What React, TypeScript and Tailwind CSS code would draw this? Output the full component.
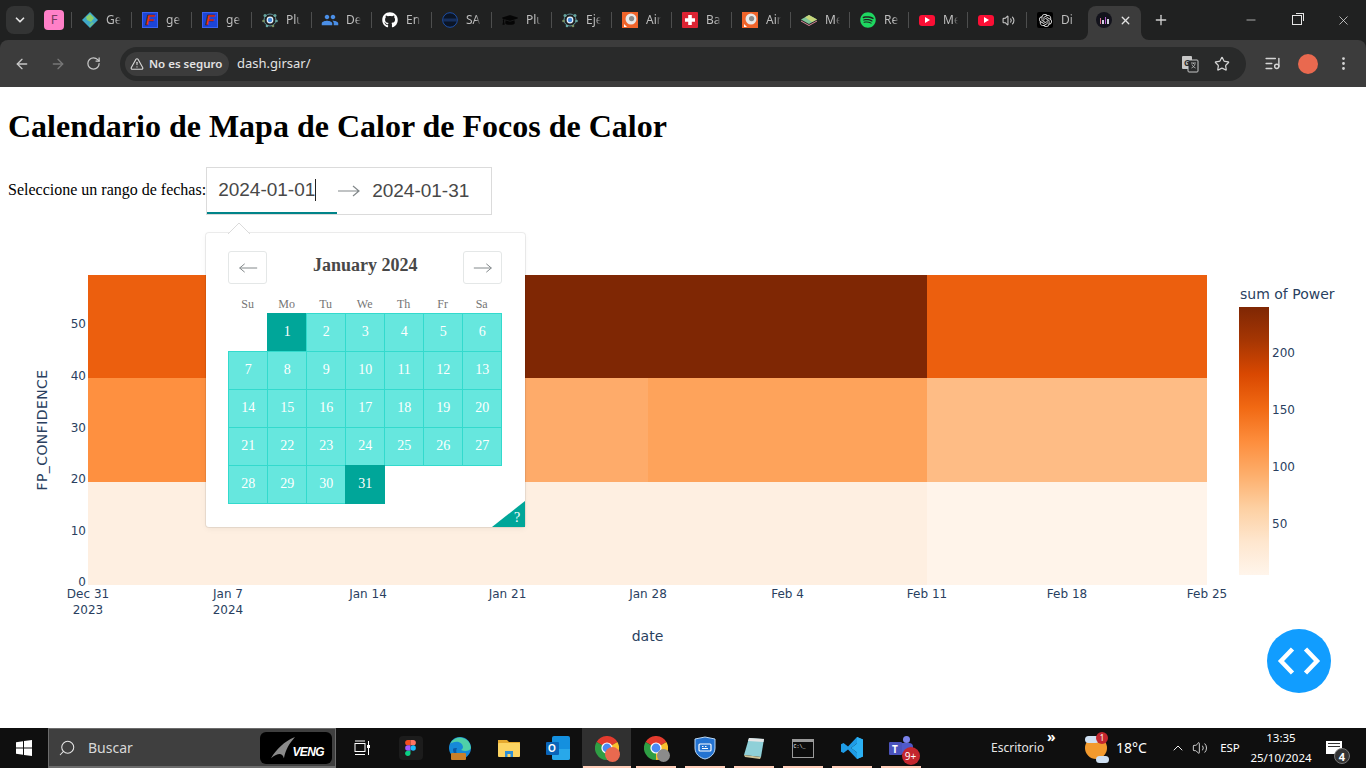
import React from "react";
import {
  ArrowLeft,
  ArrowRight,
  ChevronDown,
  ChevronUp,
  EllipsisVertical,
  ListMusic,
  Minus,
  Plus,
  RotateCw,
  Search,
  Star,
  TriangleAlert,
  Volume2,
  X,
} from "lucide-react";
import { FaGithub, FaGraduationCap, FaSpotify } from "react-icons/fa";
import { MdPeople } from "react-icons/md";
import { SiOpenai } from "react-icons/si";

// favicons
const GlobeIcon = () => (
  <svg viewBox="0 0 16 16" className="w-4 h-4">
    <polygon points="8,0 16,8 8,16 0,8" fill="#3fa9c9" />
    <polygon points="8,2 12,6 9,10 5,8 4,5" fill="#8bd06a" />
    <polygon points="10,10 12,11 8,15 7,13" fill="#6cc08a" />
  </svg>
);

const FlashIcon = () => (
  <div className="w-4 h-4 bg-[#1c45d8] flex items-center justify-center outline outline-1 -outline-offset-1 outline-[#3a63f0]">
    <span className="text-[15px] leading-4 font-bold italic text-[#f03a1c] [-webkit-text-stroke:0.4px_#3a0a00] font-['Liberation_Sans',sans-serif]">F</span>
  </div>
);

const NetworkIcon = () => (
  <svg viewBox="0 0 16 16" className="w-4 h-4">
    <circle cx="8" cy="8" r="6" fill="none" stroke="#5a8f96" strokeWidth="1" />
    <circle cx="8" cy="8" r="3.4" fill="#e8f2fa" />
    <circle cx="8" cy="8" r="2.2" fill="#3f86d8" />
    <circle cx="3" cy="3.5" r="1.5" fill="#66a6a0" />
    <circle cx="13" cy="3.5" r="1.5" fill="#66a6a0" />
    <circle cx="1.5" cy="9" r="1.3" fill="#7a8f60" />
    <circle cx="14.5" cy="9" r="1.3" fill="#66a6a0" />
    <circle cx="5" cy="14" r="1.3" fill="#66a6a0" />
    <circle cx="11" cy="14" r="1.3" fill="#7a8f60" />
  </svg>
);

const ConaeIcon = () => (
  <svg viewBox="0 0 16 16" className="w-4 h-4">
    <circle cx="8" cy="8" r="7.3" fill="#0b1526" stroke="#1d4fa8" strokeWidth="1" />
    <rect x="1" y="6.5" width="14" height="3" fill="#17305e" />
  </svg>
);

const AirIcon = () => (
  <div className="w-4 h-4 bg-[#f0642a] flex items-center justify-center">
    <svg viewBox="0 0 16 16" className="w-4 h-4">
      <circle cx="9" cy="7" r="5.5" fill="#e7e7e7" />
      <circle cx="9.6" cy="6.6" r="2.6" fill="#8a8a8a" />
      <path d="M2 15 L2 12 L5 15 Z" fill="#ffffff" />
    </svg>
  </div>
);

const SwissIcon = () => (
  <div className="w-4 h-4 bg-[#dc2433] rounded-[1px] flex items-center justify-center">
    <svg viewBox="0 0 16 16" className="w-4 h-4">
      <path d="M6.2 3h3.6v3.2H13v3.6H9.8V13H6.2V9.8H3V6.2h3.2z" fill="#fff" />
    </svg>
  </div>
);

const LayersIcon = () => (
  <svg viewBox="0 0 16 16" className="w-4 h-4">
    <polygon points="8,3 16,7.5 8,12 0,7.5" fill="#7fc79a" />
    <polygon points="8,3 16,7.5 11,10 4,5.2" fill="#c7d67a" />
    <polygon points="0,8.5 8,13 16,8.5 16,9.5 8,14 0,9.5" fill="#d98a9a" />
  </svg>
);

const YoutubeIcon = () => (
  <div className="w-4 h-[11px] bg-[#fb0f35] rounded-[3px] flex items-center justify-center">
    <div className="w-0 h-0 border-y-[3px] border-y-transparent border-l-[5px] border-l-white" />
  </div>
);

const GptIcon = () => (
  <div className="w-4 h-4 bg-black rounded-[2px] flex items-center justify-center">
    <SiOpenai size={13} color="#e5e5e5" />
  </div>
);

const DashIcon = () => (
  <div className="w-4 h-4 rounded-full bg-[#13131c] flex items-end justify-center gap-[1px] pb-[4px]">
    <div className="w-[1px] h-[6px] bg-[#d86a8a]" />
    <div className="w-[2px] h-[4px] bg-[#d0d0e0]" />
    <div className="w-[1px] h-[7px] bg-[#b05ad0]" />
    <div className="w-[2px] h-[5px] bg-[#d0d0e0]" />
  </div>
);

const tabs = [
  { icon: <GlobeIcon />, label: "Ge", w: "w-[60px]" },
  { icon: <FlashIcon />, label: "ge", w: "w-[60px]" },
  { icon: <FlashIcon />, label: "ge", w: "w-[60px]" },
  { icon: <NetworkIcon />, label: "Plu", w: "w-[60px]" },
  { icon: <MdPeople size={18} color="#4a8fe7" className="-mx-px" />, label: "De", w: "w-[60px]" },
  { icon: <FaGithub size={16} color="#fff" />, label: "En", w: "w-[60px]" },
  { icon: <ConaeIcon />, label: "SA", w: "w-[60px]" },
  { icon: <FaGraduationCap size={16} color="#050505" />, label: "Plu", w: "w-[60px]" },
  { icon: <NetworkIcon />, label: "Eje", w: "w-[60px]" },
  { icon: <AirIcon />, label: "Air", w: "w-[60px]" },
  { icon: <SwissIcon />, label: "Ba", w: "w-[60px]" },
  { icon: <AirIcon />, label: "Air", w: "w-[59px]" },
  { icon: <LayersIcon />, label: "Me", w: "w-[59px]" },
  { icon: <FaSpotify size={16} color="#1ed760" />, label: "Re", w: "w-[59px]" },
  { icon: <YoutubeIcon />, label: "Me", w: "w-[59px]" },
  { icon: <YoutubeIcon />, label: "", w: "w-[59px]" },
  { icon: <GptIcon />, label: "Di", w: "w-[62px]" },
];

const BrowserChrome = () => (
  <header className="h-[87px] shrink-0 bg-[#202121] font-['Noto_Sans',sans-serif]">
    <div className="h-10 flex items-center">
      <div className="ml-[6px] w-7 h-7 rounded-lg bg-[#333434] flex items-center justify-center">
        <ChevronDown size={14} color="#e3e3e3" strokeWidth={3} />
      </div>
      <div className="ml-[10px] w-5 h-5 rounded bg-[#ff80c8] flex items-center justify-center text-[13px] text-[#7a3a60]">F</div>
      <div className="ml-[7px] flex items-center">
        {tabs.map((tab, i) => (
          <div key={i} className={`${tab.w} h-10 flex items-center`}>
            <div className="w-px h-4 bg-[#4d4e4e]" />
            <div className="ml-[10px] w-4 h-4 flex items-center justify-center">{tab.icon}</div>
            {tab.label ? (
              <span className="ml-2 w-[15px] overflow-hidden text-xs leading-4 text-[#bdbdbd] [mask-image:linear-gradient(90deg,#000_65%,transparent)]">
                {tab.label}
              </span>
            ) : (
              <Volume2 size={13} color="#c7c7c7" className="ml-2" />
            )}
          </div>
        ))}
        <div className="relative w-[53px] h-[34px] mt-[6px] pb-[6px] bg-[#3c3c3c] rounded-t-lg flex items-center pl-2">
          <svg viewBox="0 0 8 8" className="absolute -left-2 bottom-0 w-2 h-2">
            <path d="M8 0 V8 H0 A8 8 0 0 0 8 0 Z" fill="#3c3c3c" />
          </svg>
          <svg viewBox="0 0 8 8" className="absolute -right-2 bottom-0 w-2 h-2">
            <path d="M0 0 V8 H8 A8 8 0 0 1 0 0 Z" fill="#3c3c3c" />
          </svg>
          <DashIcon />
          <X size={13} color="#e3e3e3" strokeWidth={2.5} className="ml-[7px]" />
        </div>
        <Plus size={16} color="#d0d0d0" strokeWidth={2} className="ml-3" />
      </div>
      <div className="ml-auto flex items-center">
        <div className="w-[46px] h-10 flex items-center justify-center">
          <Minus size={14} color="#e6e6e6" strokeWidth={1.2} />
        </div>
        <div className="w-[46px] h-10 flex items-center justify-center">
          <div className="relative w-[10px] h-[10px] border border-[#e6e6e6] bg-[#202121]">
            <div className="absolute -top-[3px] -right-[3px] w-[8px] h-[8px] border-t border-r border-[#e6e6e6]" />
          </div>
        </div>
        <div className="w-[46px] h-10 flex items-center justify-center">
          <X size={15} color="#e6e6e6" strokeWidth={1.2} />
        </div>
      </div>
    </div>
    <div className="h-[47px] bg-[#3c3c3c] rounded-t-lg flex items-center">
      <div className="w-[120px] flex items-center pl-[14px] gap-5">
        <ArrowLeft size={16} color="#c7c7c7" strokeWidth={2} />
        <ArrowRight size={16} color="#777" strokeWidth={2} />
        <RotateCw size={15} color="#c7c7c7" strokeWidth={2} />
      </div>
      <div className="w-[1126px] h-[34px] rounded-full bg-[#292a2a] flex items-center pl-[5px] pr-4">
        <div className="w-[104px] h-6 rounded-full bg-[#3c3c3c] flex items-center pl-[5px] gap-[5px]">
          <TriangleAlert size={14} color="#d5d5d5" />
          <span className="text-[11.5px] font-semibold text-[#e3e3e3] whitespace-nowrap">No es seguro</span>
        </div>
        <span className="ml-2 text-[13px] text-[#e3e3e3]">dash.girsar/</span>
        <div className="ml-auto flex items-center gap-[15px]">
          <svg viewBox="0 0 18 18" className="w-[18px] h-[18px]">
            <rect x="1" y="1" width="10" height="13" rx="1" fill="#c7c7c7" />
            <rect x="7" y="5" width="10" height="12" rx="1" fill="#292a2a" stroke="#c7c7c7" strokeWidth="1" />
            <text x="3" y="11" fontSize="8" fontWeight="700" fill="#292a2a">G</text>
            <path d="M10 8h5M12.5 8v1M14 9c-.5 2-2 3.5-3.5 4M11 9.5c.5 1.5 2 3 3.5 3.5" stroke="#c7c7c7" strokeWidth="0.8" fill="none" />
          </svg>
          <Star size={16} color="#d5d5d5" strokeWidth={1.8} />
        </div>
      </div>
      <ListMusic size={17} color="#d5d5d5" className="ml-[18px]" />
      <div className="ml-[17px] w-5 h-5 rounded-full bg-[#e9694f]" />
      <EllipsisVertical size={17} color="#d5d5d5" className="ml-[17px]" />
    </div>
  </header>
);

const weekDays = ["Su", "Mo", "Tu", "We", "Th", "Fr", "Sa"];
const days = Array.from({ length: 31 }, (_, i) => i + 1);

const ThinArrow = ({ left, className }: { left?: boolean; className: string }) => (
  <svg viewBox="0 0 24 12" className={className} fill="none" stroke="#82888a" strokeWidth="1.2">
    {left ? <path d="M23 6H2M8 1L2 6l6 5" /> : <path d="M1 6h21M16 1l6 5-6 5" />}
  </svg>
);

const DatePopover = () => (
  <div className="absolute left-0 top-[66px] z-10 w-[319px] h-[294px] bg-white rounded-[3px] shadow-[0_2px_6px_rgba(0,0,0,0.05),0_0_0_1px_rgba(0,0,0,0.07)] pl-[22px] pr-[23px] pt-[18px]">
    <svg viewBox="0 0 22 11" className="absolute left-[22px] -top-[10px] w-[22px] h-[11px]">
      <path d="M0 11 L11 0 L22 11" fill="#fff" stroke="#dbdbdb" strokeWidth="1" />
    </svg>
    <div className="flex items-center justify-between">
      <div className="w-[39px] h-[33px] border border-[#e4e7e7] rounded-[3px] flex items-center justify-center">
        <ThinArrow left className="w-[20px] h-[10px]" />
      </div>
      <span className="text-lg font-bold text-[#484848] -mt-[5px]">January 2024</span>
      <div className="w-[39px] h-[33px] border border-[#e4e7e7] rounded-[3px] flex items-center justify-center">
        <ThinArrow className="w-[20px] h-[10px]" />
      </div>
    </div>
    <div className="mt-[12px] grid grid-cols-[repeat(7,39px)] h-[17px]">
      {weekDays.map((d) => (
        <span key={d} className="text-center text-xs leading-[17px] text-[#757575]">{d}</span>
      ))}
    </div>
    <div className="grid grid-cols-[repeat(7,39px)] auto-rows-[38px]">
      <div />
      {days.map((d) => (
        <div
          key={d}
          className={
            d === 1 || d === 31
              ? "w-[40px] h-[39px] pb-[2px] border border-[#00a699] bg-[#00a699] text-white text-sm flex items-center justify-center"
              : "w-[40px] h-[39px] pb-[2px] border border-[#33dacd] bg-[#66e7de] text-white text-sm flex items-center justify-center"
          }
        >
          {d}
        </div>
      ))}
    </div>
    <div className="absolute right-0 bottom-0 w-0 h-0 border-b-[26px] border-b-[#00a699] border-l-[33px] border-l-transparent" />
    <span className="absolute right-[5px] bottom-[1px] text-sm leading-4 text-white">?</span>
  </div>
);

const xTicks = [
  { x: 88, l: "Dec 31", s: "2023" },
  { x: 228, l: "Jan 7", s: "2024" },
  { x: 368, l: "Jan 14" },
  { x: 507.5, l: "Jan 21" },
  { x: 648, l: "Jan 28" },
  { x: 787.5, l: "Feb 4" },
  { x: 927, l: "Feb 11" },
  { x: 1067, l: "Feb 18" },
  { x: 1207, l: "Feb 25" },
];
const yTicks = [
  { y: 586, l: "0" },
  { y: 534.5, l: "10" },
  { y: 482.5, l: "20" },
  { y: 431.5, l: "30" },
  { y: 379.5, l: "40" },
  { y: 327.5, l: "50" },
];
const bars = [
  { y: 357, l: "200" },
  { y: 414, l: "150" },
  { y: 471, l: "100" },
  { y: 528, l: "50" },
];
const cells = [
  { x: 88, y: 275, w: 280, h: 103, c: "#ec5f0e" },
  { x: 368, y: 275, w: 559, h: 103, c: "#7f2704" },
  { x: 927, y: 275, w: 280, h: 103, c: "#ec5f0e" },
  { x: 88, y: 378, w: 280, h: 104, c: "#fe9040" },
  { x: 368, y: 378, w: 280, h: 104, c: "#feab6a" },
  { x: 648, y: 378, w: 279, h: 104, c: "#fea35b" },
  { x: 927, y: 378, w: 280, h: 104, c: "#febc85" },
  { x: 88, y: 482, w: 839, h: 103, c: "#feefe1" },
  { x: 927, y: 482, w: 280, h: 103, c: "#fff4ea" },
];

const Heatmap = () => (
  <svg viewBox="0 215 1366 450" className="block w-[1366px] h-[450px] font-['DejaVu_Sans',sans-serif] fill-[#2a3f5f]">
    <defs>
      <linearGradient id="oranges" x1="0" y1="1" x2="0" y2="0">
        <stop offset="0" stopColor="#fff5eb" />
        <stop offset="0.125" stopColor="#fee6ce" />
        <stop offset="0.25" stopColor="#fdd0a2" />
        <stop offset="0.375" stopColor="#fdae6b" />
        <stop offset="0.5" stopColor="#fd8d3c" />
        <stop offset="0.625" stopColor="#f16913" />
        <stop offset="0.75" stopColor="#d94801" />
        <stop offset="0.875" stopColor="#a63603" />
        <stop offset="1" stopColor="#7f2704" />
      </linearGradient>
    </defs>
    {cells.map((c, i) => (
      <rect key={i} x={c.x} y={c.y} width={c.w} height={c.h} fill={c.c} shapeRendering="crispEdges" />
    ))}
    {xTicks.map((t) => (
      <g key={t.l} fontSize="12" textAnchor="middle">
        <text x={t.x} y={598}>{t.l}</text>
        {t.s && <text x={t.x} y={614}>{t.s}</text>}
      </g>
    ))}
    {yTicks.map((t) => (
      <text key={t.l} x={86} y={t.y} fontSize="12" textAnchor="end">{t.l}</text>
    ))}
    <text x={647.5} y={641} fontSize="14" textAnchor="middle">date</text>
    <text x={47} y={430} fontSize="14" letterSpacing="0.4" textAnchor="middle" transform="rotate(-90 47 430)">FP_CONFIDENCE</text>
    <text x={1240} y={299} fontSize="14">sum of Power</text>
    <rect x={1239} y={307} width={30} height={268} fill="url(#oranges)" />
    {bars.map((b) => (
      <text key={b.l} x={1272} y={b.y} fontSize="12">{b.l}</text>
    ))}
  </svg>
);

// taskbar icons
const ChromeLogo = ({ children }: { children?: React.ReactNode }) => (
  <div className="relative w-6 h-6">
    <svg viewBox="0 0 24 24" className="w-6 h-6">
      <path d="M12 12 L1.6 6 A12 12 0 0 1 22.4 6 Z" fill="#e33b2e" />
      <path d="M12 12 L22.4 6 A12 12 0 0 1 12 24 Z" fill="#fbc02d" />
      <path d="M12 12 L12 24 A12 12 0 0 1 1.6 6 Z" fill="#2f9e44" />
      <circle cx="12" cy="12" r="5.6" fill="#fff" />
      <circle cx="12" cy="12" r="4.4" fill="#4a8af4" />
    </svg>
    {children}
  </div>
);

const taskApps = [
  {
    key: "view",
    node: (
      <svg viewBox="0 0 16 16" className="w-4 h-4" fill="none" stroke="#fff" strokeWidth="1">
        <rect x="1" y="3.5" width="10" height="8" />
        <path d="M1 1h10M1 14.5h10M14.5 1v4M14.5 8v7" />
        <rect x="13.5" y="5.5" width="2" height="2" fill="#fff" />
      </svg>
    ),
  },
  {
    key: "figma",
    node: (
      <div className="w-6 h-6 rounded bg-[#1c1c1c] flex items-center justify-center">
        <svg viewBox="0 0 12 18" className="w-[11px] h-4">
          <path d="M3 0h3v6H3a3 3 0 0 1 0-6z" fill="#f24e1e" />
          <path d="M6 0h3a3 3 0 0 1 0 6H6z" fill="#ff7262" />
          <path d="M3 6h3v6H3a3 3 0 0 1 0-6z" fill="#a259ff" />
          <circle cx="9" cy="9" r="3" fill="#1abcfe" />
          <path d="M3 12h3v3a3 3 0 1 1-3-3z" fill="#0acf83" />
        </svg>
      </div>
    ),
  },
  {
    key: "edge",
    node: (
      <svg viewBox="0 0 24 24" className="w-6 h-6">
        <circle cx="12" cy="12" r="11" fill="#1689d8" />
        <path d="M23 12a11 11 0 0 0-21-4c3-3 12-4 13 3 0 2-2 3-2 3 4 2 9 1 10-2z" fill="#4fd0a8" />
        <path d="M5 13c0 5 4 9 9 8-5-1-7-5-5-9-2 0-4 0-4 1z" fill="#0c5aa6" />
        <rect x="3" y="17" width="15" height="7" rx="1" fill="#c9802a" />
      </svg>
    ),
  },
  {
    key: "files",
    node: (
      <svg viewBox="0 0 24 24" className="w-6 h-6">
        <path d="M1 4h9l2 2h11v3H1z" fill="#e5a92f" />
        <rect x="1" y="7" width="22" height="14" rx="1" fill="#fcd462" />
        <path d="M8 21v-6h8v6h-2.5v-3h-3v3z" fill="#2e8fd6" />
      </svg>
    ),
  },
  {
    key: "outlook",
    node: (
      <div className="relative w-6 h-6">
        <div className="absolute right-0 top-0 w-[18px] h-6 bg-[#1490df] rounded-[2px]" />
        <div className="absolute right-0 bottom-0 w-[18px] h-[11px] bg-[#28a8ea] rounded-b-[2px]" />
        <div className="absolute left-0 top-[6px] w-[13px] h-[13px] bg-[#0a64b8] rounded-[1px] flex items-center justify-center text-[10px] leading-none font-bold text-white font-['Liberation_Sans',sans-serif]">O</div>
      </div>
    ),
  },
  {
    key: "chrome",
    active: true,
    line: "w-[48px]",
    node: (
      <ChromeLogo>
        <div className="absolute -right-[1px] -bottom-[2px] w-[15px] h-[15px] rounded-full bg-[#e9694f]" />
      </ChromeLogo>
    ),
  },
  {
    key: "chrome2",
    line: "w-[40px]",
    node: (
      <ChromeLogo>
        <div className="absolute -right-[2px] -bottom-[2px] w-[13px] h-[13px] rounded-full bg-[#8b8b8b]" />
      </ChromeLogo>
    ),
  },
  {
    key: "shield",
    line: "w-[40px]",
    node: (
      <svg viewBox="0 0 22 24" className="w-[22px] h-6">
        <path d="M11 1 L21 3 V12 C21 18 16 22 11 23 C6 22 1 18 1 12 V3 Z" fill="#2473d1" stroke="#bcd9f5" strokeWidth="1" />
        <rect x="5" y="8" width="12" height="7" rx="1" fill="none" stroke="#fff" strokeWidth="1.2" />
        <path d="M8 10.5h1.5M11 10.5h1.5M8 12.5h6" stroke="#fff" strokeWidth="1" />
      </svg>
    ),
  },
  {
    key: "notepad",
    line: "w-[40px]",
    node: (
      <svg viewBox="0 0 24 24" className="w-6 h-6">
        <polygon points="7,2 22,3 19,21 2,19" fill="#8fd0d8" />
        <polygon points="7,2 22,3 21.5,6 6,5" fill="#e5e5e5" />
        <polygon points="19,21 2,19 3,21 18,23" fill="#cfc59a" />
      </svg>
    ),
  },
  {
    key: "terminal",
    line: "w-[40px]",
    node: (
      <div className="w-[22px] h-[19px] bg-[#0c0c0c] border border-[#9a9a9a] border-t-[3px] flex items-start pl-[1px] pt-[2px]">
        <span className="text-[5px] leading-[6px] text-white font-['Liberation_Mono',monospace]">C:\_</span>
      </div>
    ),
  },
  {
    key: "code",
    line: "w-[40px]",
    node: (
      <svg viewBox="0 0 24 24" className="w-6 h-6">
        <path d="M17 1 L8 10.5 L3.5 7 L1 8.2 V15.8 L3.5 17 L8 13.5 L17 23 L23 20.5 V3.5 Z M17 7.5 L11 12 L17 16.5 Z" fill="#1f9ce6" fillRule="evenodd" />
        <path d="M17 1 L23 3.5 V20.5 L17 23 Z M17 7.5 V16.5 L11 12 Z" fill="#2bb0f3" fillRule="evenodd" />
      </svg>
    ),
  },
  {
    key: "teams",
    line: "w-[40px]",
    node: (
      <div className="relative w-6 h-6">
        <div className="absolute right-[3px] top-0 w-[7px] h-[7px] rounded-full bg-[#7b83eb]" />
        <div className="absolute right-0 top-[7px] w-[15px] h-[11px] rounded-sm bg-[#5059c9]" />
        <div className="absolute left-0 top-[6px] w-[13px] h-[13px] rounded-[1px] bg-[#4b53bc] flex items-center justify-center text-[10px] leading-none font-bold text-white">T</div>
        <div className="absolute -right-[7px] bottom-[-5px] w-[18px] h-[18px] rounded-full bg-[#c4262e] flex items-center justify-center text-[10px] leading-none text-white">9+</div>
      </div>
    ),
  },
];

const Taskbar = () => (
  <footer className="h-10 shrink-0 bg-[#0f0f0f] flex items-stretch text-white font-['Noto_Sans',sans-serif]">
    <div className="w-12 flex items-center justify-center">
      <svg viewBox="0 0 16 16" className="w-4 h-4" fill="#fff">
        <polygon points="0,2.2 7,1.2 7,7.6 0,7.6" />
        <polygon points="8,1 16,0 16,7.6 8,7.6" />
        <polygon points="0,8.4 7,8.4 7,14.8 0,13.8" />
        <polygon points="8,8.4 16,8.4 16,16 8,15" />
      </svg>
    </div>
    <div className="w-[288px] bg-[#3f3f3f] border border-[#6c6c6c] border-b-2 flex items-center">
      <Search size={18} color="#e6e6e6" strokeWidth={1.4} className="ml-[9px] -scale-x-100" />
      <span className="ml-[12px] text-sm text-[#d8d8d8]">Buscar</span>
      <div className="ml-auto mr-[3px] w-[72px] h-8 rounded-md bg-black flex items-center justify-end pr-[8px] relative">
        <svg viewBox="0 0 30 26" className="absolute left-[8px] top-[4px] w-[30px] h-[24px]">
          <path d="M2 24 C8 14 16 6 28 1 C22 8 18 14 16 24 C14 18 10 18 2 24 Z" fill="#8a8a8a" />
        </svg>
        <span className="text-[12px] leading-none font-bold italic tracking-tighter font-['Liberation_Sans',sans-serif] mt-2">VENG</span>
      </div>
    </div>
    <div className="ml-px flex">
      {taskApps.map((app) => (
        <div
          key={app.key}
          className={
            app.active
              ? "relative w-[49px] bg-[#303030] flex items-center justify-center"
              : "relative w-[49px] flex items-center justify-center"
          }
        >
          {app.node}
          {app.line && <div className={`absolute bottom-0 left-1/2 -translate-x-1/2 h-[2px] bg-[#ffcdb8] ${app.line}`} />}
        </div>
      ))}
    </div>
    <div className="ml-[66px] w-[56px] flex items-center text-xs text-[#e6e6e6]">Escritorio</div>
    <div className="w-[38px] text-sm leading-3 pt-[3px] font-bold">»</div>
    <div className="relative w-[31px] flex items-center">
      <div className="w-[22px] h-[22px] rounded-full bg-[#f29a2e]" />
      <div className="absolute left-0 top-[8px] w-[14px] h-[7px] rounded-full bg-[#cfe0f2]" />
      <div className="absolute left-[11px] bottom-[5px] w-[13px] h-[7px] rounded-full bg-[#cfe0f2]" />
      <div className="absolute left-[11px] top-[4px] w-[12px] h-[12px] rounded-full bg-[#c4262e] flex items-center justify-center text-[8px] leading-none">1</div>
    </div>
    <div className="w-[50px] flex items-center text-sm">18°C</div>
    <div className="w-[23px] flex items-center justify-center">
      <ChevronUp size={16} color="#fff" strokeWidth={1.4} />
    </div>
    <div className="w-[22px] flex items-center justify-center">
      <Volume2 size={16} color="#fff" strokeWidth={1.2} />
    </div>
    <div className="w-[33px] pl-[5px] flex items-center justify-center text-[11.5px]">ESP</div>
    <div className="w-[74px] flex flex-col items-center justify-center text-[11.5px] leading-[20px]">
      <span>13:35</span>
      <span>25/10/2024</span>
    </div>
    <div className="relative w-[32px] flex items-center justify-center">
      <div className="w-4 h-[13px] bg-white mb-[2px] flex flex-col gap-[2px] p-[2px]">
        <div className="h-px bg-[#333]" />
        <div className="h-px bg-[#333]" />
      </div>
      <div className="absolute right-[0px] bottom-[4px] w-[16px] h-[16px] rounded-full bg-[#333] border border-[#777] flex items-center justify-center text-[11px] leading-none font-bold">4</div>
    </div>
  </footer>
);

const App = () => {
  return (
    <div className="relative w-[1366px] h-[768px] overflow-hidden bg-white flex flex-col">
      <BrowserChrome />
      <main className="flex-1 overflow-hidden font-['Liberation_Serif',serif] text-black">
        <h1 className="mt-[20px] ml-2 text-[32px] leading-[38px] font-bold">Calendario de Mapa de Calor de Focos de Calor</h1>
        <div className="mt-[22px] ml-2 flex items-center">
          <span className="text-base pb-[2px]">Seleccione un rango de fechas:</span>
          <div className="relative">
            <div className="w-[286px] h-12 border border-[#dbdbdb] flex items-stretch font-['Liberation_Sans',sans-serif] text-[19px] text-[#484848]">
              <div className="w-[130px] pl-[11px] flex items-center border-b-2 border-[#008489]">
                <span>2024-01-01</span>
                <span className="w-px h-[22px] bg-[#222]" />
              </div>
              <ThinArrow className="self-center w-[24px] h-[12px]" />
              <span className="ml-[11px] self-center">2024-01-31</span>
            </div>
            <DatePopover />
          </div>
        </div>
        <Heatmap />
      </main>
      <Taskbar />
      <div className="absolute left-[1267px] top-[629px] w-16 h-16 rounded-full bg-[#119dff] flex items-center justify-center">
        <svg viewBox="0 0 64 64" className="w-16 h-16" fill="none" stroke="#fff" strokeWidth="4.5">
          <path d="M25.5 20 L14 32 L25.5 44" />
          <path d="M38.5 20 L50 32 L38.5 44" />
        </svg>
      </div>
    </div>
  );
};

export default App;
